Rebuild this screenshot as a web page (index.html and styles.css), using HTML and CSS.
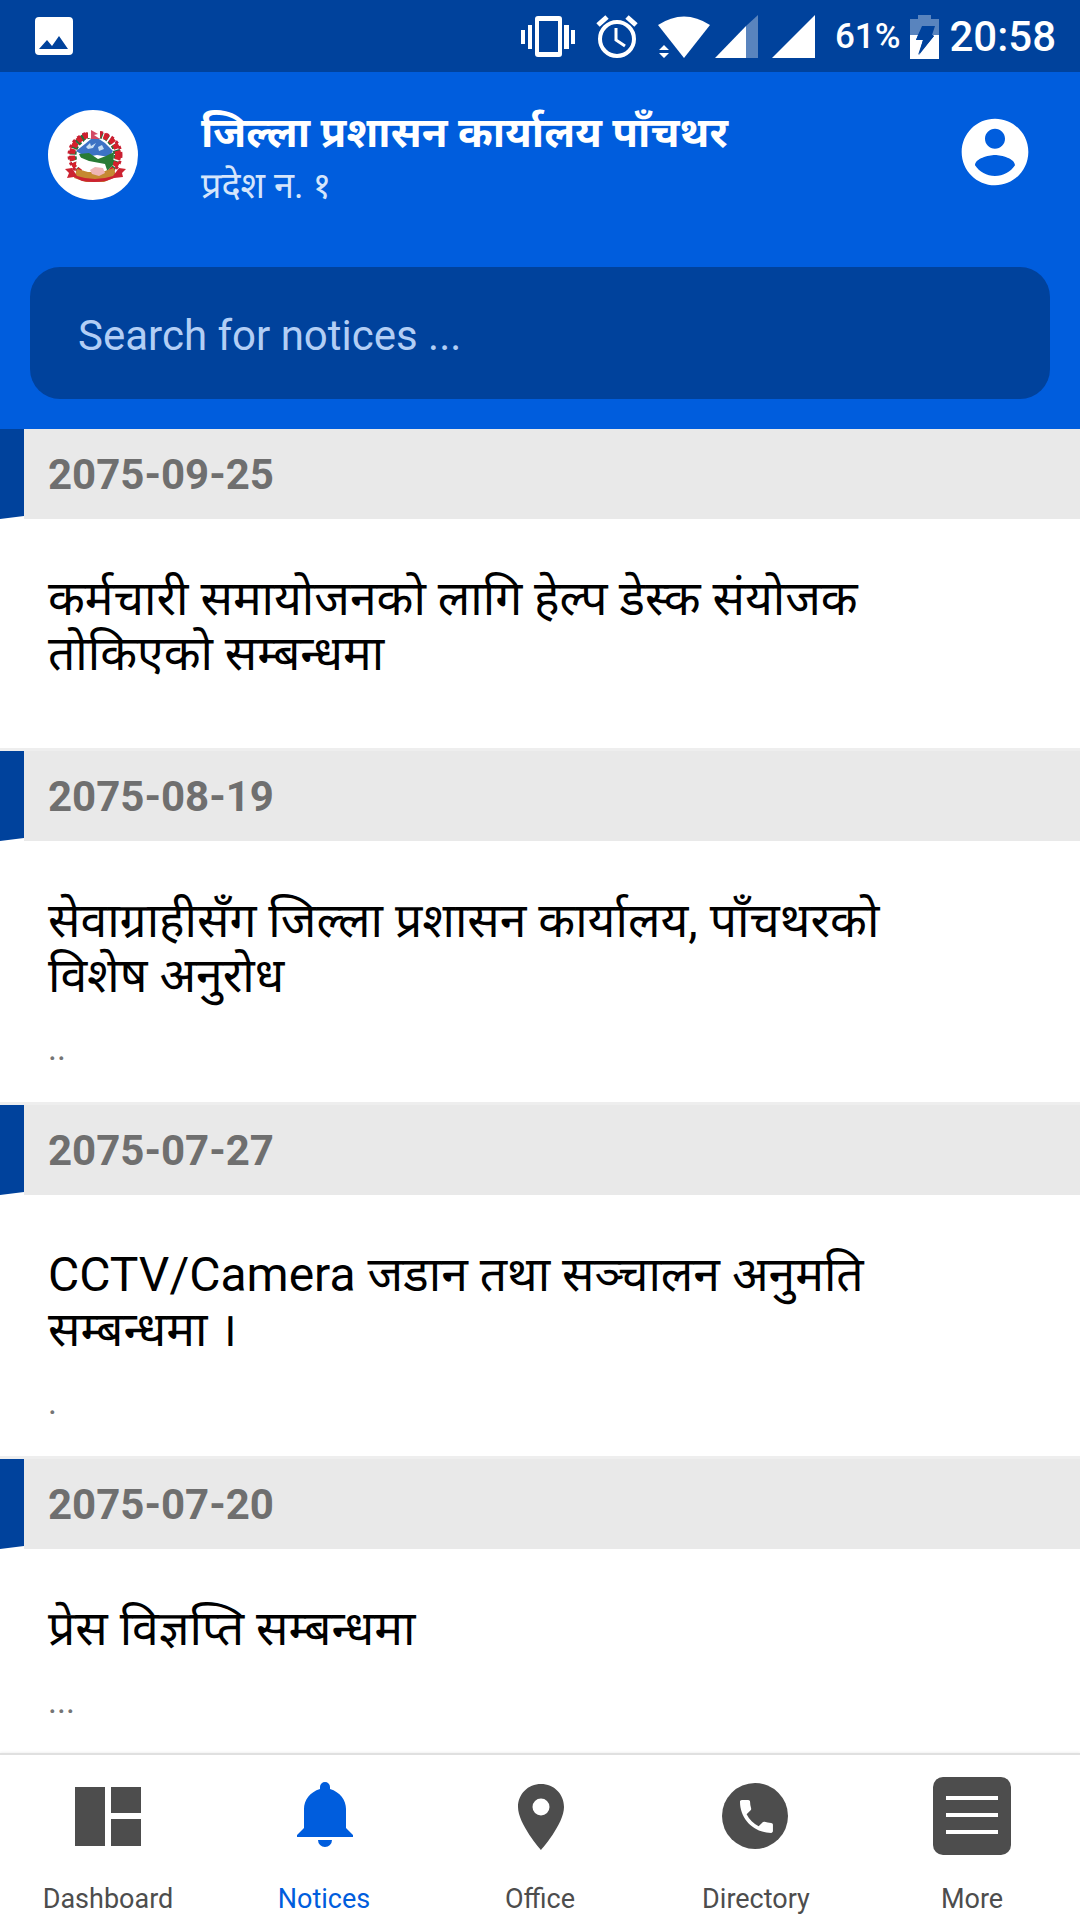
FILE: index.html
```html
<!DOCTYPE html>
<html lang="ne">
<head>
  <meta charset="UTF-8">
  <meta name="viewport" content="width=device-width, initial-scale=1.0">
  <title>Notices</title>
  <link rel="stylesheet" href="styles.css">
</head>
<body>
  <div class="statusbar">
    <svg class="status-image" width="38" height="38" viewBox="0 0 38 38">
      <path fill="#fff" fill-rule="evenodd" d="M4 0h30a4 4 0 0 1 4 4v30a4 4 0 0 1-4 4H4a4 4 0 0 1-4-4V4a4 4 0 0 1 4-4zM4 32h29L24 19l-7 10-5-6z"/>
    </svg>
    <div class="status-right">
      <svg width="64" height="44" viewBox="0 0 64 44" fill="#fff">
        <path fill-rule="evenodd" d="M22 1h21a3 3 0 0 1 3 3v35a3 3 0 0 1-3 3H22a3 3 0 0 1-3-3V4a3 3 0 0 1 3-3zM23 6v31h19V6z"/>
        <path d="M5 15h4v14H5zM12 10h4v24h-4zM48 10h5v24h-5zM55 15h4v14h-4z"/>
      </svg>
      <svg width="54" height="44" viewBox="0 0 54 44" fill="none" stroke="#fff">
        <circle cx="27" cy="24" r="17" stroke-width="4"/>
        <path stroke-width="3" d="M26 13v12l9 6"/>
        <path stroke-width="5" d="M8 10l9-8M46 10l-9-8"/>
      </svg>
      <svg width="171" height="44" viewBox="0 0 171 44" fill="#fff">
        <path d="M4 10Q30-7 56 10L30 43z"/>
        <path d="M5 35l5-5 5 5zM5 38h10l-5 5z"/>
        <path d="M61 43L92 11v32z"/>
        <path opacity=".35" d="M92 11L104 0v43H92z"/>
        <path d="M118 43L161 0v43z"/>
      </svg>
      <span class="battery-level">61%</span>
      <svg width="29" height="44" viewBox="0 0 29 44" fill="#fff">
        <path opacity=".35" d="M0 4h8V0h13v4h8v16h-7l3-9H13L8 20H0z"/>
        <path d="M0 20h8l-2 5h7L9 40l15-19-1-1h6v24H0z"/>
        <path fill="#00429c" d="M12 11h11l-6 10h7L8 40l5-15H6z"/>
      </svg>
      <span class="clock">20:58</span>
    </div>
  </div>

  <header class="header">
    <div class="office">
      <svg class="emblem" viewBox="0 0 90 90">
        <circle cx="45" cy="45" r="45" fill="#fff"/>
        <ellipse cx="47" cy="45" rx="22" ry="20" fill="none" stroke="#25723a" stroke-width="7" stroke-dasharray="4 2"/>
        <ellipse cx="47" cy="45" rx="23" ry="21" fill="none" stroke="#d5202b" stroke-width="6" stroke-dasharray="5 2"/>
        <ellipse cx="47" cy="45" rx="26" ry="23" fill="none" stroke="#c81f32" stroke-width="3" stroke-dasharray="3 3"/>
        <path fill="#fff" d="M30 40l7-10 10-3 10 3 8 10v15l-8 8H38l-10-8z"/>
        <path fill="#3c72c4" d="M28 41l9-7 6-5h8l6 4 8 8-4 6-12-2-11 2z"/>
        <path fill="#c7def3" d="M38 37l4-4 1 3 5-3-3 5-5 1zM50 37l4-2 2 4-5 2z"/>
        <path fill="#287b35" d="M31 44l10-1 9 6 8-3 8-4-1 13-6 6-4-6-10-2-11-3z"/>
        <path fill="#fff" d="M29 46l12 5 16 3 2 6-8 3-10-1-8-6z"/>
        <path fill="#c58a31" d="M29 59l11 3h14l12-4 2 9-12 5H38l-12-4z"/>
        <path fill="#efb5b5" d="M42 60l5-3 8 1 2 5-6 3-7-2z"/>
        <path fill="#cc2331" d="M17 59l7-1 5 8q18 6 36 0l6-8 7 1-4 4 1 4-9 1-8 3q-12 2-24 0l-8-4-7 1 2-5z"/>
        <path fill="#fff" d="M40 19h12v9H40z"/>
        <path fill="#d34a65" d="M43 20l7 4-4 1 6 4h-9z"/>
      </svg>
      <div class="office-text">
        <h1>जिल्ला प्रशासन कार्यालय पाँचथर</h1>
        <p>प्रदेश न. १</p>
      </div>
      <button class="account" type="button" aria-label="Account">
        <svg viewBox="0 0 24 24" width="80" height="80" fill="#fff">
          <path d="M12 2C6.480 2 2 6.480 2 12s4.480 10 10 10 10-4.480 10-10S17.520 2 12 2zm0 3c1.660 0 3 1.340 3 3s-1.340 3-3 3-3-1.340-3-3 1.340-3 3-3zm0 14.200c-2.500 0-4.710-1.280-6-3.220.030-1.990 4-3.080 6-3.080 1.990 0 5.970 1.090 6 3.080-1.290 1.940-3.500 3.220-6 3.220z"/>
        </svg>
      </button>
    </div>
    <input class="search" type="text" placeholder="Search for notices ..." aria-label="Search for notices">
  </header>

  <main class="notices">
    <article class="notice">
      <div class="date"><time>2075-09-25</time></div>
      <div class="notice-body">
        <h2>कर्मचारी समायोजनको लागि हेल्प डेस्क संयोजक तोकिएको सम्बन्धमा</h2>
        <p></p>
      </div>
    </article>
    <article class="notice">
      <div class="date"><time>2075-08-19</time></div>
      <div class="notice-body">
        <h2>सेवाग्राहीसँग जिल्ला प्रशासन कार्यालय, पाँचथरको विशेष अनुरोध</h2>
        <p>..</p>
      </div>
    </article>
    <article class="notice">
      <div class="date"><time>2075-07-27</time></div>
      <div class="notice-body">
        <h2>CCTV/Camera जडान तथा सञ्चालन अनुमति सम्बन्धमा ।</h2>
        <p>.</p>
      </div>
    </article>
    <article class="notice">
      <div class="date"><time>2075-07-20</time></div>
      <div class="notice-body">
        <h2>प्रेस विज्ञप्ति सम्बन्धमा</h2>
        <p>...</p>
      </div>
    </article>
  </main>

  <nav class="tabs">
    <a href="#dashboard">
      <svg viewBox="0 0 80 80"><path d="M7 11h30v59H7zM43 11h30v26H43zM43 43h30v27H43z"/></svg>
      Dashboard
    </a>
    <a class="active" href="#notices">
      <svg viewBox="0 0 80 80"><path d="M36 13v-2a5 5 0 0 1 10 0v2c10 3 16 11 16 20v19l7 7v2H13v-2l7-7V33c0-9 6-17 16-20zM34 64h14a7 7 0 0 1-14 0z"/></svg>
      Notices
    </a>
    <a href="#office">
      <svg viewBox="0 0 80 80"><path fill-rule="evenodd" d="M41 8C28 8 18 18 18 31c0 17 23 43 23 43s23-26 23-43C64 18 54 8 41 8zm0 14.500a8.500 8.500 0 1 1 0 17 8.500 8.500 0 0 1 0-17z"/></svg>
      Office
    </a>
    <a href="#directory">
      <svg viewBox="0 0 80 80"><circle cx="39" cy="40" r="33"/><path fill="#fff" transform="translate(18.500 18.500) scale(1.830)" d="M6.620 10.790c1.440 2.830 3.760 5.140 6.590 6.590l2.200-2.200c.270-.270.670-.360 1.020-.240 1.120.370 2.330.570 3.570.570.550 0 1 .450 1 1V20c0 .550-.450 1-1 1-9.390 0-17-7.610-17-17 0-.550.450-1 1-1h3.500c.550 0 1 .450 1 1 0 1.250.200 2.450.570 3.570.110.350.030.740-.250 1.020l-2.200 2.200z"/></svg>
      Directory
    </a>
    <a href="#more">
      <svg viewBox="0 0 80 80"><rect x="1" y="1" width="78" height="78" rx="10"/><path fill="#fff" d="M14 20h52v4H14zM14 37h52v4H14zM14 54h52v4H14z"/></svg>
      More
    </a>
  </nav>
</body>
</html>
```
FILE: styles.css
```css
* { box-sizing: border-box; }
body { margin: 0; min-height: 100vh; display: flex; flex-direction: column; background: #fff; font-family: Roboto, "Noto Sans Devanagari", "Noto Sans", sans-serif; }
h1, h2, p { margin: 0; }
svg { display: block; flex-shrink: 0; }

.statusbar { height: 72px; padding: 0 24px 0 35px; display: flex; justify-content: space-between; align-items: center; background: #00429c; color: #fff; }
.status-right { display: flex; align-items: center; gap: 10px; font-weight: 500; line-height: 44px; padding-top: 2px; }
.battery-level { font-size: 35px; }
.clock { font-size: 42px; }

.header { padding: 32px 30px 30px; background: #005ddd; }
.office { display: flex; align-items: flex-start; padding: 0 15px 0 18px; margin-bottom: 51px; }
.emblem { width: 90px; height: 90px; margin-top: 6px; }
.office-text { flex: 1; margin-left: 63px; padding-top: 2px; color: #fff; }
.office-text h1 { font-size: 42px; line-height: 54px; }
.office-text p { font-size: 36px; line-height: 52px; color: #d5e5fb; }
.account { padding: 0; margin-top: 8px; margin-bottom: 24px; border: 0; background: none; cursor: pointer; }
.search { display: block; width: 100%; padding: 42px 48px 38px; border: 0; border-radius: 30px; background: #00429c; color: #fff; font-family: inherit; font-size: 42px; line-height: 52px; height: 132px; }
.search::placeholder { color: #b2cef5; opacity: 1; }

.notices { flex: 1; }
.notice { border-bottom: 3px solid #eeeeee; }
.notice:last-child { border-bottom: 0; }
.date { display: flex; height: 90px; font-size: 42px; font-weight: bold; line-height: 92px; color: #6f6f6f; }
.date::before { content: ""; width: 24px; background: #00429c; clip-path: polygon(0 0, 100% 0, 100% 87px, 0 100%); }
.date time { flex: 1; padding-left: 24px; background: #e9e9e9; }
.notice-body { padding: 52px 180px 38px 48px; }
.notice:last-child .notice-body { padding-bottom: 24px; }
.notice-body h2 { font-size: 48px; font-weight: normal; line-height: 55px; color: #000; }
.notice-body p { padding-top: 29px; font-size: 34px; line-height: 32px; color: #757575; }

.tabs { display: flex; padding: 21px 0 5px; border-top: 2px solid #e0e0e0; box-shadow: 0 -1px 2px #f2f2f2; background: #fff; }
.tabs a { flex: 1; display: flex; flex-direction: column; align-items: center; gap: 27px; font-size: 27px; line-height: 32px; color: #4d4d4d; text-decoration: none; }
.tabs svg { width: 80px; height: 80px; fill: currentColor; }
.tabs .active { color: #005ddd; }
```
